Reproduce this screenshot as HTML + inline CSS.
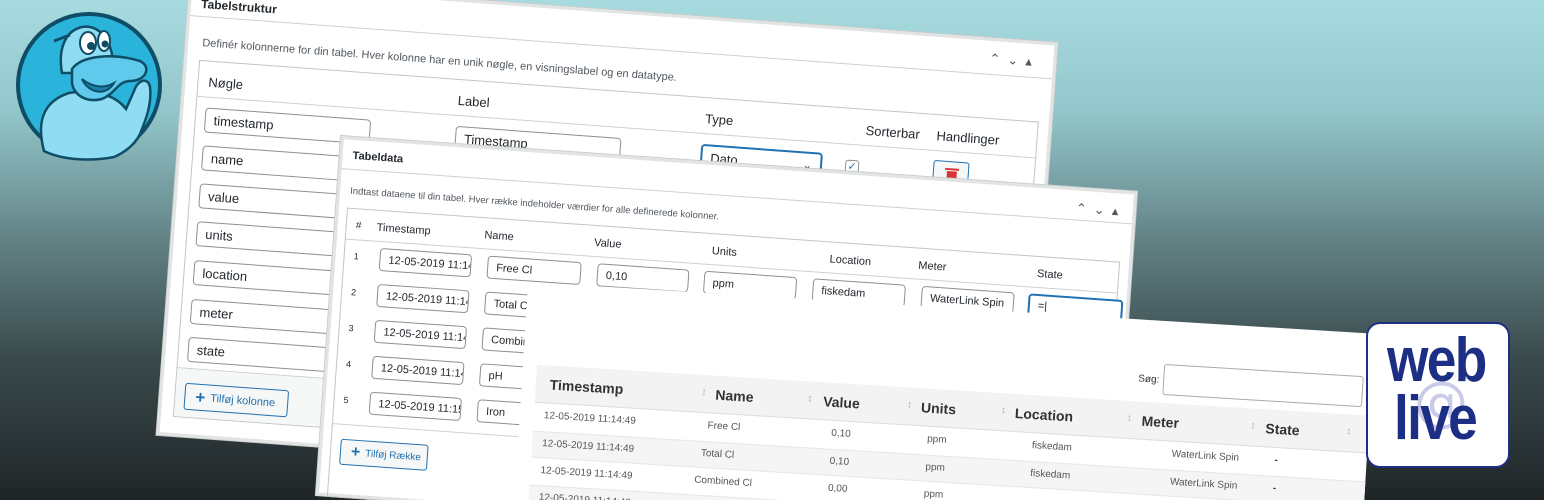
<!DOCTYPE html>
<html style="width:1544px;height:500px;overflow:hidden"><head><meta charset="utf-8"><style>
*{box-sizing:border-box;margin:0;padding:0}
body{width:1544px;height:500px;overflow:hidden;position:relative;font-family:"Liberation Sans",sans-serif;background:linear-gradient(180deg,#a7dbdf 0%,#93c7cb 22%,#5f7d80 50%,#3a4a4c 72%,#1f2527 100%)}
.p{position:absolute;background:#fff;transform-origin:0 0;border:3px solid #e2e4e4;box-shadow:0 0 0 1px #c9cccc;color:#23282d}
.a{position:absolute;white-space:nowrap}
.in{position:absolute;border:1px solid #8c8f94;border-radius:4px;background:#fff;padding-left:8px;display:flex;align-items:center;overflow:hidden;white-space:nowrap}
.hl{position:absolute;height:1px;background:#ccd0d4}
.btn{position:absolute;border:1px solid #2271b1;border-radius:3px;color:#2271b1;display:flex;align-items:center;padding-left:10px;background:#f6f7f7}
.chev{position:absolute;font-size:13px;color:#50575e}
</style></head><body>

<!-- mascot -->
<svg style="position:absolute;left:14px;top:11px" width="152" height="150" viewBox="0 0 152 150">
<circle cx="75" cy="74" r="71" fill="#2ab4dc" stroke="#0f4d66" stroke-width="4"/>
<path d="M30 140 C22 110 30 90 55 82 C75 78 100 82 112 98 L120 80 C124 68 134 66 136 76 C138 92 132 108 128 118 C124 132 110 142 100 146 C80 150 50 150 30 140Z" fill="#8fdcf3" stroke="#0f4d66" stroke-width="2.5"/>
<path d="M48 62 C44 40 50 20 68 16 C80 14 92 22 96 36 C100 48 100 56 96 62 Z" fill="#8fdcf3" stroke="#0f4d66" stroke-width="2.5"/>
<path d="M58 58 C68 44 100 42 126 50 C138 56 132 70 116 70 C104 70 102 82 88 88 C72 92 60 84 58 72Z" fill="#5fcaeb" stroke="#0f4d66" stroke-width="2.5"/>
<path d="M68 68 C74 82 92 86 100 72 C90 78 78 76 68 68Z" fill="#1a7fa8" stroke="#0f4d66" stroke-width="2"/>
<ellipse cx="74" cy="32" rx="8" ry="11" fill="#fff" stroke="#0f4d66" stroke-width="2"/>
<ellipse cx="90" cy="30" rx="6" ry="10" fill="#fff" stroke="#0f4d66" stroke-width="2"/>
<circle cx="77" cy="35" r="4" fill="#0f4d66"/><circle cx="91" cy="33" r="3.5" fill="#0f4d66"/>
<path d="M40 30 L56 24" stroke="#0f4d66" stroke-width="3"/>
</svg>

<!-- panel 1 -->
<div class="p" style="left:190px;top:-21px;width:870px;height:457px;transform:rotate(4.2deg)">
 <div class="a" style="left:10px;top:14px;font-size:12px;font-weight:bold">Tabelstruktur</div>
 <div class="hl" style="left:0;right:0;top:33px"></div>
 <div class="chev" style="left:800px;top:10px">&#8963;&nbsp;&nbsp;&#8964;&nbsp;&nbsp;&#9652;</div>
 <div class="a" style="left:14px;top:54px;font-size:11px;color:#50575e">Definér kolonnerne for din tabel. Hver kolonne har en unik nøgle, en visningslabel og en datatype.</div>
 <div style="position:absolute;left:12px;top:77px;width:842px;height:358px;border:1px solid #c3c4c7">
  <div class="a" style="left:10px;top:13px;font-size:13px">Nøgle</div>
  <div class="a" style="left:260px;top:13px;font-size:13px">Label</div>
  <div class="a" style="left:508px;top:13px;font-size:13px">Type</div>
  <div class="a" style="left:669px;top:13px;font-size:13px">Sorterbar</div>
  <div class="a" style="left:740px;top:13px;font-size:13px">Handlinger</div>
  <div class="hl" style="left:0;right:0;top:35px"></div>
  <div class="in" style="left:9px;top:46px;width:166px;height:25px;font-size:13px">timestamp</div>
  <div class="in" style="left:9px;top:84px;width:166px;height:25px;font-size:13px">name</div>
  <div class="in" style="left:9px;top:122px;width:166px;height:25px;font-size:13px">value</div>
  <div class="in" style="left:9px;top:160px;width:166px;height:25px;font-size:13px">units</div>
  <div class="in" style="left:9px;top:199px;width:166px;height:25px;font-size:13px">location</div>
  <div class="in" style="left:9px;top:238px;width:166px;height:25px;font-size:13px">meter</div>
  <div class="in" style="left:9px;top:276px;width:166px;height:25px;font-size:13px">state</div>
  <div class="in" style="left:260px;top:46px;width:166px;height:25px;font-size:13px">Timestamp</div>
  <div class="in" style="left:506px;top:46px;width:122px;height:27px;font-size:13px;border:2px solid #2271b1">Dato<span style="position:absolute;right:8px;font-size:11px">&#8964;</span></div>
  <div style="position:absolute;left:651px;top:51px;width:14px;height:14px;border:1px solid #8c8f94;border-radius:3px;color:#2271b1;font-size:11px;line-height:12px;text-align:center">&#10003;</div>
  <div style="position:absolute;left:739px;top:45px;width:36px;height:28px;border:1px solid #2271b1;border-radius:3px;background:#f6f7f7"><div style="position:absolute;left:13px;top:9px;width:10px;height:12px;background:#d63638;border-radius:0 0 2px 2px"></div><div style="position:absolute;left:11px;top:6px;width:14px;height:2px;background:#d63638"></div></div>
  <div class="hl" style="left:0;right:0;top:307px"></div>
  <div style="position:absolute;left:0;right:0;top:308px;bottom:0;background:#f6f7f7"></div>
  <div class="btn" style="left:9px;top:322px;width:104px;height:27px;font-size:11px"><b style="font-size:17px;margin-right:5px">+</b>Tilføj kolonne</div>
 </div>
</div>

<!-- panel 2 -->
<div class="p" style="left:341px;top:136px;width:798px;height:360px;transform:rotate(4deg)">
 <div class="a" style="left:10px;top:10px;font-size:11px;font-weight:bold">Tabeldata</div>
 <div class="hl" style="left:0;right:0;top:29px"></div>
 <div class="chev" style="left:735px;top:10px">&#8963;&nbsp;&nbsp;&#8964;&nbsp;&nbsp;&#9652;</div>
 <div class="a" style="left:10px;top:46px;font-size:9.5px;color:#50575e">Indtast dataene til din tabel. Hver række indeholder værdier for alle definerede kolonner.</div>
 <div style="position:absolute;left:8px;top:68px;width:775px;height:290px;border:1px solid #c3c4c7">
  <div class="a" style="left:9px;top:11px;font-size:10px">#</div>
  <div class="a" style="left:30px;top:11px;font-size:11px">Timestamp</div>
  <div class="a" style="left:138px;top:11px;font-size:11px">Name</div>
  <div class="a" style="left:248px;top:11px;font-size:11px">Value</div>
  <div class="a" style="left:366px;top:11px;font-size:11px">Units</div>
  <div class="a" style="left:484px;top:11px;font-size:11px">Location</div>
  <div class="a" style="left:573px;top:11px;font-size:11px">Meter</div>
  <div class="a" style="left:692px;top:11px;font-size:11px">State</div>
  <div class="hl" style="left:0;right:0;top:30px"></div>
  <div class="a" style="left:9px;top:42px;font-size:9px">1</div>
  <div class="a" style="left:9px;top:78px;font-size:9px">2</div>
  <div class="a" style="left:9px;top:114px;font-size:9px">3</div>
  <div class="a" style="left:9px;top:150px;font-size:9px">4</div>
  <div class="a" style="left:9px;top:186px;font-size:9px">5</div>
  <div class="in" style="left:35px;top:37px;width:92px;height:23px;font-size:11px">12-05-2019 11:14</div>
  <div class="in" style="left:35px;top:73px;width:92px;height:23px;font-size:11px">12-05-2019 11:14</div>
  <div class="in" style="left:35px;top:109px;width:92px;height:23px;font-size:11px">12-05-2019 11:14</div>
  <div class="in" style="left:35px;top:145px;width:92px;height:23px;font-size:11px">12-05-2019 11:14</div>
  <div class="in" style="left:35px;top:181px;width:92px;height:23px;font-size:11px">12-05-2019 11:15</div>
  <div class="in" style="left:143px;top:37px;width:94px;height:23px;font-size:11px">Free Cl</div>
  <div class="in" style="left:143px;top:73px;width:94px;height:23px;font-size:11px">Total Cl</div>
  <div class="in" style="left:143px;top:109px;width:94px;height:23px;font-size:11px">Combined Cl</div>
  <div class="in" style="left:143px;top:145px;width:94px;height:23px;font-size:11px">pH</div>
  <div class="in" style="left:143px;top:181px;width:94px;height:23px;font-size:11px">Iron</div>
  <div class="in" style="left:253px;top:37px;width:92px;height:23px;font-size:11px">0,10</div>
  <div class="in" style="left:360px;top:37px;width:93px;height:23px;font-size:11px">ppm</div>
  <div class="in" style="left:469px;top:37px;width:93px;height:23px;font-size:11px">fiskedam</div>
  <div class="in" style="left:578px;top:37px;width:93px;height:23px;font-size:11px">WaterLink Spin</div>
  <div class="in" style="left:685px;top:37px;width:95px;height:23px;font-size:11px;border:2px solid #2271b1">=|</div>
  <div class="hl" style="left:0;right:0;top:215px"></div>
  <div class="btn" style="left:9px;top:230px;width:88px;height:26px;font-size:10px"><b style="font-size:16px;margin-right:5px">+</b>Tilføj Række</div>
 </div>
</div>

<!-- panel 3 -->
<div class="p" style="left:528px;top:282px;width:848px;height:260px;transform:rotate(3.5deg);border:none;box-shadow:none;color:#333">
 <div class="a" style="left:615px;top:54px;font-size:10px">Søg:</div>
 <div style="position:absolute;left:640px;top:43px;width:200px;height:31px;border:1px solid #aaa;border-radius:3px"></div>
 <div style="position:absolute;left:14px;top:82px;width:834px;height:38px;background:#f3f3f3;border-bottom:1px solid #ddd"></div>
 <div class="a" style="left:28px;top:93px;font-size:14px;font-weight:bold">Timestamp</div>
 <div class="a" style="left:194px;top:93px;font-size:14px;font-weight:bold">Name</div>
 <div class="a" style="left:302px;top:93px;font-size:14px;font-weight:bold">Value</div>
 <div class="a" style="left:400px;top:93px;font-size:14px;font-weight:bold">Units</div>
 <div class="a" style="left:494px;top:93px;font-size:14px;font-weight:bold">Location</div>
 <div class="a" style="left:621px;top:93px;font-size:14px;font-weight:bold">Meter</div>
 <div class="a" style="left:745px;top:93px;font-size:14px;font-weight:bold">State</div>
 <div class="a" style="left:180px;top:94px;font-size:10px;color:#aaa">&#8597;</div>
 <div class="a" style="left:286px;top:94px;font-size:10px;color:#aaa">&#8597;</div>
 <div class="a" style="left:386px;top:94px;font-size:10px;color:#aaa">&#8597;</div>
 <div class="a" style="left:480px;top:94px;font-size:10px;color:#aaa">&#8597;</div>
 <div class="a" style="left:606px;top:94px;font-size:10px;color:#aaa">&#8597;</div>
 <div class="a" style="left:730px;top:94px;font-size:10px;color:#aaa">&#8597;</div>
 <div class="a" style="left:826px;top:94px;font-size:10px;color:#aaa">&#8597;</div>
 <div style="position:absolute;left:14px;top:148px;width:834px;height:27px;background:#f5f5f5;border-top:1px solid #e6e6e6;border-bottom:1px solid #e6e6e6"></div>
 <div style="position:absolute;left:14px;top:202px;width:834px;height:27px;background:#f5f5f5;border-top:1px solid #e6e6e6;border-bottom:1px solid #e6e6e6"></div>
 <div style="position:absolute;left:0;top:0;font-size:10px;color:#555">
  <div class="a" style="left:24px;top:127px">12-05-2019 11:14:49</div>
  <div class="a" style="left:24px;top:155px">12-05-2019 11:14:49</div>
  <div class="a" style="left:24px;top:182px">12-05-2019 11:14:49</div>
  <div class="a" style="left:24px;top:209px">12-05-2019 11:14:49</div>
  <div class="a" style="left:188px;top:127px">Free Cl</div>
  <div class="a" style="left:183px;top:155px">Total Cl</div>
  <div class="a" style="left:178px;top:182px">Combined Cl</div>
  <div class="a" style="left:312px;top:127px">0,10</div>
  <div class="a" style="left:312px;top:155px">0,10</div>
  <div class="a" style="left:312px;top:182px">0,00</div>
  <div class="a" style="left:408px;top:127px">ppm</div>
  <div class="a" style="left:408px;top:155px">ppm</div>
  <div class="a" style="left:408px;top:182px">ppm</div>
  <div class="a" style="left:513px;top:127px">fiskedam</div>
  <div class="a" style="left:513px;top:155px">fiskedam</div>
  <div class="a" style="left:653px;top:127px">WaterLink Spin</div>
  <div class="a" style="left:653px;top:155px">WaterLink Spin</div>
  <div class="a" style="left:756px;top:127px;font-weight:bold;color:#333">-</div>
  <div class="a" style="left:756px;top:155px;font-weight:bold;color:#333">-</div>
 </div>
</div>

<!-- logo -->
<div style="position:absolute;left:1366px;top:322px;width:144px;height:146px;background:#fff;border:2px solid #1d2f85;border-radius:14px;overflow:hidden">
 <div class="a" style="left:46px;top:46px;font-size:54px;color:#c9c9ea;font-family:'DejaVu Sans',sans-serif">@</div>
 <div class="a" style="left:19px;top:6px;font-size:62px;font-weight:bold;color:#1d2f85;letter-spacing:-2px;line-height:62px;transform:scaleX(0.86);transform-origin:0 0">web</div>
 <div class="a" style="left:26px;top:64px;font-size:62px;font-weight:bold;color:#1d2f85;letter-spacing:-2px;line-height:62px;transform:scaleX(0.86);transform-origin:0 0">live</div>
</div>
</body></html>
